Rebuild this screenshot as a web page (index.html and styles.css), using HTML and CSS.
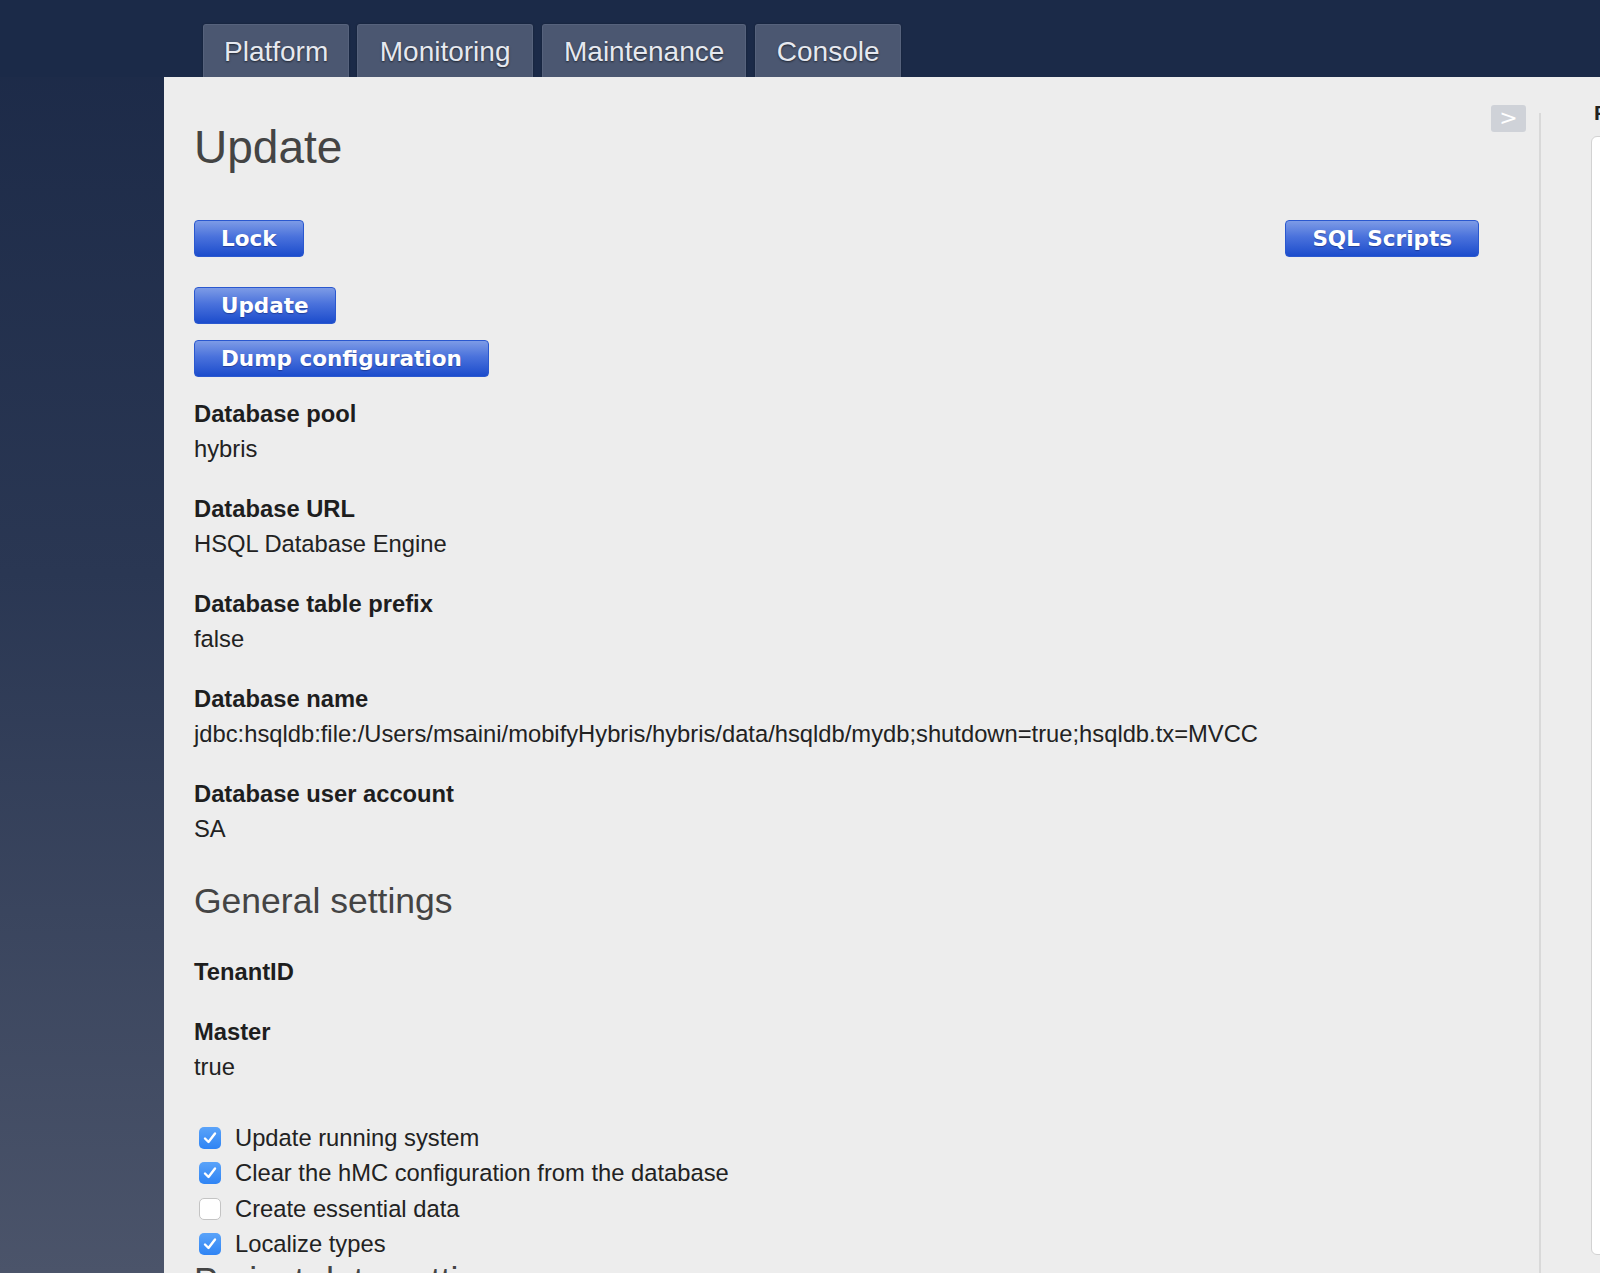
FILE: index.html
```html
<!DOCTYPE html>
<html lang="en">
<head>
<meta charset="utf-8">
<title>Update</title>
<link rel="stylesheet" href="styles.css">
</head>
<body>
<div class="page">
  <nav class="tabs">
    <a class="tab">Platform</a>
    <a class="tab">Monitoring</a>
    <a class="tab">Maintenance</a>
    <a class="tab">Console</a>
  </nav>
  <div class="panel">
    <main class="content">
      <span class="toggle">&gt;</span>
      <h1 class="title">Update</h1>
      <div class="btn-row first">
        <button class="btn">Lock</button>
        <button class="btn">SQL Scripts</button>
      </div>
      <div class="btn-row second">
        <button class="btn">Update</button>
      </div>
      <div class="btn-row third">
        <button class="btn">Dump configuration</button>
      </div>

      <div class="fields">
        <div class="field"><div class="label">Database pool</div><div class="value">hybris</div></div>
        <div class="field"><div class="label">Database URL</div><div class="value">HSQL Database Engine</div></div>
        <div class="field"><div class="label">Database table prefix</div><div class="value">false</div></div>
        <div class="field"><div class="label">Database name</div><div class="value">jdbc:hsqldb:file:/Users/msaini/mobifyHybris/hybris/data/hsqldb/mydb;shutdown=true;hsqldb.tx=MVCC</div></div>
        <div class="field"><div class="label">Database user account</div><div class="value">SA</div></div>
      </div>

      <h2 class="section">General settings</h2>
      <div class="fields general">
        <div class="field"><div class="label">TenantID</div><div class="value empty"></div></div>
        <div class="field"><div class="label">Master</div><div class="value">true</div></div>
      </div>

      <ul class="checks">
        <li class="check"><span class="box on"><svg viewBox="0 0 22 22" width="22" height="22"><path d="M6 11.5 L9.5 15 L16 6.5" fill="none" stroke="#fff" stroke-width="2.4" stroke-linecap="round" stroke-linejoin="round"/></svg></span>Update running system</li>
        <li class="check"><span class="box on"><svg viewBox="0 0 22 22" width="22" height="22"><path d="M6 11.5 L9.5 15 L16 6.5" fill="none" stroke="#fff" stroke-width="2.4" stroke-linecap="round" stroke-linejoin="round"/></svg></span>Clear the hMC configuration from the database</li>
        <li class="check"><span class="box"></span>Create essential data</li>
        <li class="check"><span class="box on"><svg viewBox="0 0 22 22" width="22" height="22"><path d="M6 11.5 L9.5 15 L16 6.5" fill="none" stroke="#fff" stroke-width="2.4" stroke-linecap="round" stroke-linejoin="round"/></svg></span>Localize types</li>
      </ul>
      <h2 class="section last">Project data settings</h2>
    </main>
    <div class="divider"></div>
    <aside class="side">
      <div class="side-title">Filter</div>
      <div class="side-box"></div>
    </aside>
  </div>
</div>
</body>
</html>
```

FILE: styles.css
```css
html, body {
  margin: 0;
  padding: 0;
}
body {
  width: 1600px;
  height: 1273px;
  overflow: hidden;
  background: linear-gradient(to bottom, #1b2947 0%, #2a3753 45%, #4b546a 100%);
  font-family: "Liberation Sans", Arial, sans-serif;
  color: #222;
}
.page {
  display: flex;
  flex-direction: column;
  height: 1273px;
}
.tabs {
  display: flex;
  gap: 9px;
  padding: 24px 0 0 203px;
  height: 53px;
  background: #1b2a48;
}
.tab {
  display: block;
  height: 53px;
  box-sizing: border-box;
  padding: 0 20px;
  line-height: 53px;
  font-size: 28px;
  color: #e6e9f0;
  background: #4b5771;
  border: 1px solid #56627c;
  border-bottom: none;
  border-radius: 3px 3px 0 0;
  text-shadow: 0 1px 2px rgba(0, 0, 0, 0.6);
  box-shadow: 0 0 2px rgba(0, 0, 0, 0.35);
}
.tab:nth-child(1) { margin-right: -1px; }
.tab:nth-child(2) { padding: 0 21.5px; }
.tab:nth-child(3) { padding: 0 21px; }
.tab:nth-child(4) { padding: 0 20.5px; }
.panel {
  display: flex;
  flex: 1;
  margin-left: 164px;
  background: #ededed;
}
.content {
  position: relative;
  flex: 0 0 1375px;
  box-sizing: border-box;
  padding: 44px 60px 0 30px;
}
.toggle {
  position: absolute;
  top: 28px;
  right: 13px;
  width: 35px;
  height: 27px;
  border-radius: 3px;
  background: #cfd2d8;
  color: #fff;
  font-size: 22px;
  line-height: 26px;
  text-align: center;
  font-family: "DejaVu Sans", sans-serif;
}
.title {
  margin: 0;
  font-size: 46px;
  line-height: 52px;
  font-weight: normal;
  color: #444;
}
.btn-row {
  display: flex;
  justify-content: space-between;
}
.btn-row.first { margin-top: 47px; }
.btn-row.second { margin-top: 30px; }
.btn-row.third { margin-top: 16px; }
.btn {
  height: 37px;
  box-sizing: border-box;
  padding: 0 26px;
  border: 1px solid #2a58cf;
  border-radius: 4px;
  background: linear-gradient(to bottom, #7d9be6 0%, #4a72dc 45%, #1c4ccc 100%);
  color: #fff;
  font-family: "DejaVu Sans", sans-serif;
  font-weight: bold;
  font-size: 21.5px;
  line-height: 35px;
  text-shadow: 0 1px 1px rgba(0, 0, 50, 0.35);
}
.fields {
  margin-top: 19px;
}
.field + .field {
  margin-top: 25px;
}
.label {
  font-weight: bold;
  font-size: 23.75px;
  line-height: 35px;
  color: #1e1e1e;
}
.value {
  font-size: 23.75px;
  line-height: 35px;
  color: #222;
  white-space: nowrap;
}
.value.empty {
  height: 0;
}
.section {
  margin: 37px 0 0;
  font-size: 35.5px;
  line-height: 36px;
  font-weight: normal;
  color: #444;
}
.fields.general {
  margin-top: 35px;
}
.checks {
  list-style: none;
  margin: 36px 0 0;
  padding: 0;
}
.check {
  display: flex;
  align-items: center;
  height: 35.5px;
  font-size: 23.75px;
  color: #222;
}
.box {
  width: 22px;
  height: 22px;
  box-sizing: border-box;
  margin: 0 14px 0 5px;
  border-radius: 5px;
  background: #fff;
  border: 1px solid #c4c4c4;
  flex: 0 0 auto;
  display: flex;
}
.box.on {
  border: none;
  background: linear-gradient(to bottom, #5aa3f9 0%, #2f84f4 100%);
}
.section.last {
  margin-top: 0;
}
.divider {
  flex: 0 0 2px;
  margin-top: 36px;
  background: #d9d9d9;
}
.side {
  flex: 1;
  overflow: hidden;
  padding-left: 50px;
}
.side-title {
  margin: 24px 0 0 3px;
  font-size: 21px;
  line-height: 24px;
  font-weight: bold;
  color: #222;
  white-space: nowrap;
}
.side-box {
  margin-top: 11px;
  width: 60px;
  height: 1117px;
  background: #fff;
  border: 1px solid #d2d2d2;
  border-radius: 6px;
}
```
